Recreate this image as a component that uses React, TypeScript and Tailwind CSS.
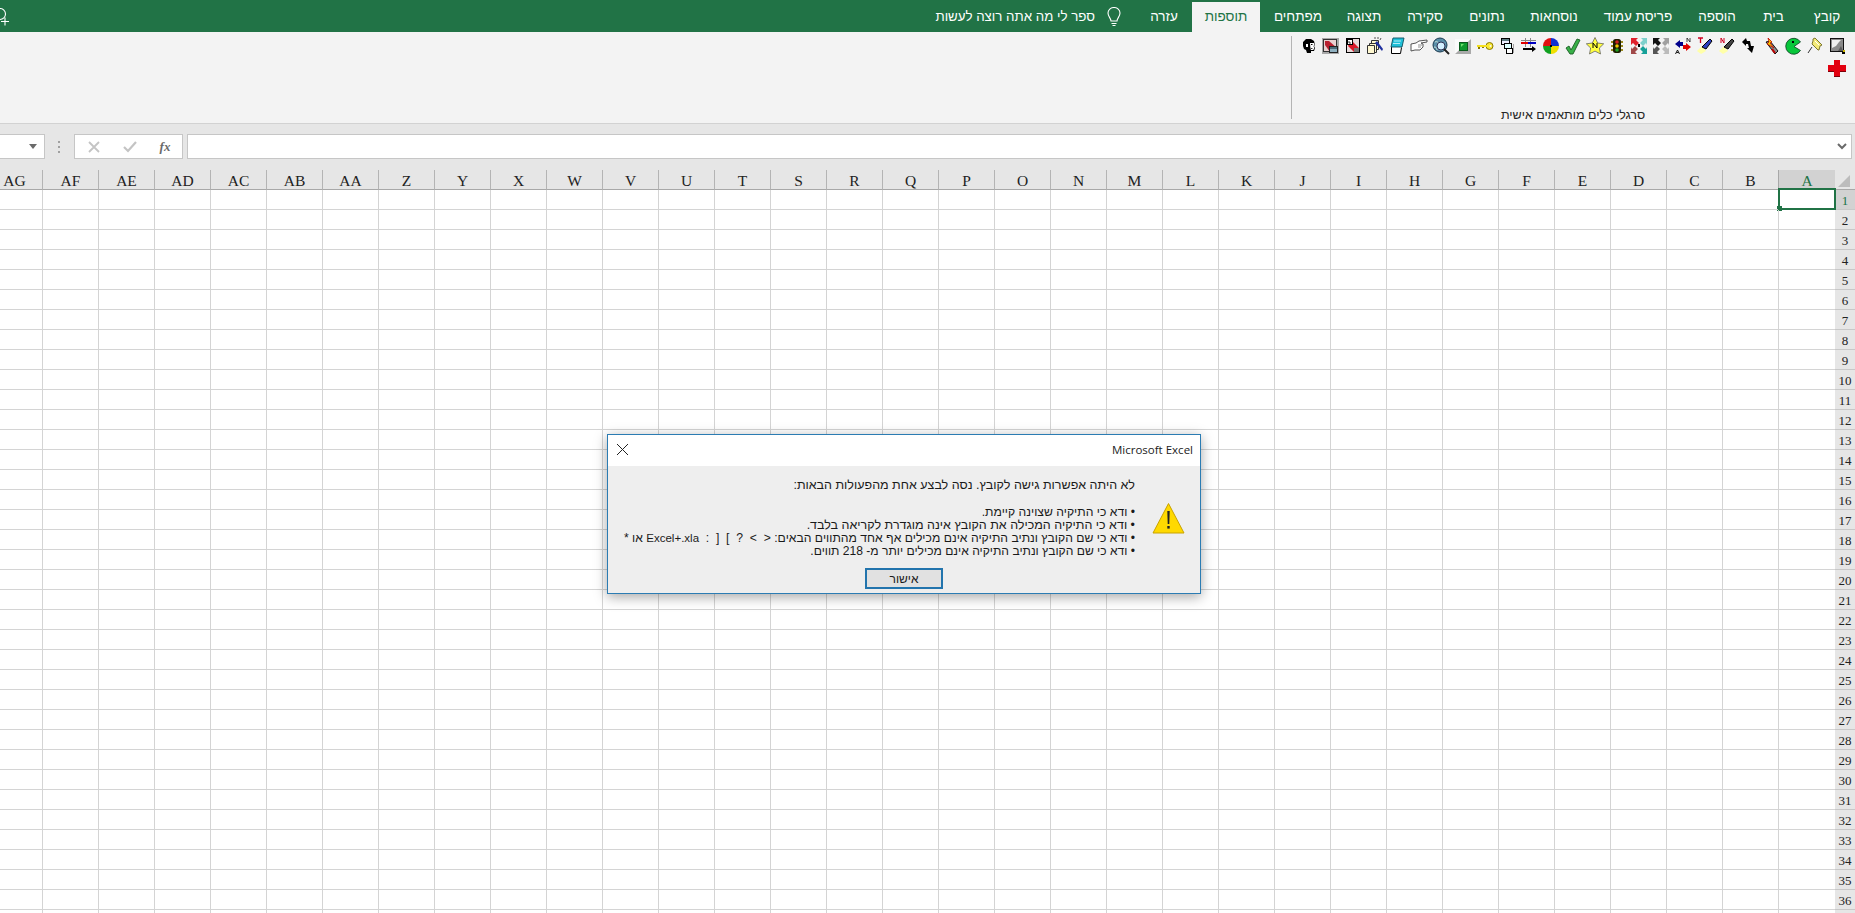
import React from "react";

const S = ({ children }: { children: React.ReactNode }) => (
  <svg width="18" height="18" viewBox="0 0 18 18" className="shrink-0">
    {children}
  </svg>
);

const icons: React.ReactNode[] = [
  // right to left order
  <S key="screen">
    <rect x="2.500" y="1.500" width="13" height="13" fill="#8a8a8a" stroke="#111" />
    <path d="M4 3h9l-2 2-3 4-4 2z" fill="#eee" />
    <path d="M13 9l2 5h-5z" fill="#5c5c5c" />
    <path d="M14 15h3v2h-3z" fill="#000" />
    <rect x="15" y="13" width="2" height="2" fill="#c9b400" />
  </S>,
  <S key="pin">
    <path d="M7 2l2-1 7 7-2 1-1 4-1 0-6-6 1-3z" fill="#f3ea78" stroke="#6f6a20" strokeWidth=".9" />
    <path d="M6 10L2 16" stroke="#333" strokeWidth="1" />
    <path d="M9 4l4 4" stroke="#fff" />
  </S>,
  <S key="pac">
    <path d="M16.500 5A8 8 0 1 0 16.500 13.500L10 9.500z" fill="#08c63a" stroke="#0a3a20" strokeWidth=".8" />
    <rect x="8" y="4" width="2" height="2" fill="#000" />
  </S>,
  <S key="bolt">
    <path d="M4 5l4-1 8 10-3 3z" fill="#8a8a8a" stroke="#000" strokeWidth=".9" />
    <path d="M6 1l4 4-2 1 4 5-7-4 2-2z" fill="#f4d000" stroke="#c00000" strokeWidth=".8" />
    <path d="M10 12l3 4" stroke="#c00000" strokeWidth="2" />
  </S>,
  <S key="swap">
    <path d="M2 5l4-4 1 3h3l1 5h3l-2 7-5-5h2l-1-4H6v2z" fill="#000" />
  </S>,
  <S key="torchn">
    <path d="M6 9l4 5-5 3-4-3z" fill="#ffffa8" />
    <path d="M6 10l8-8 2 2-6 8z" fill="#444" stroke="#000" />
    <path d="M3 1v5M3 1l3 5M6 1v5" stroke="#d00020" fill="none" strokeWidth="1" />
  </S>,
  <S key="torcht">
    <path d="M6 9l4 5-5 3-4-3z" fill="#ffffa8" />
    <path d="M6 10l8-8 2 2-6 8z" fill="#2c3fc0" stroke="#000" />
    <path d="M2 1h5M4.500 1v5" stroke="#d00020" fill="none" strokeWidth="1.300" />
  </S>,
  <S key="aarrows">
    <path d="M1 7l5-4v2h3v4H6v2z" fill="#00008c" />
    <path d="M17 10l-5-4v2H9v4h3v2z" fill="#e00000" />
    <path d="M1.500 17l2-4 2 4M2.500 15.500h2" stroke="#000" fill="none" strokeWidth=".9" />
    <path d="M13 5V1l3 4V1" stroke="#000" fill="none" strokeWidth=".7" />
  </S>,
  <S key="grayarrows">
    <path d="M1 1h7L6 3l3 3-3 3-3-3-2 2z" fill="#111" />
    <path d="M17 1h-6l2 2-3 3 3 3 3-3 1 2z" fill="#a0a0a0" />
    <path d="M1 17h6l-2-2 3-3-3-3-3 3-1-2z" fill="#555" />
    <path d="M17 17h-6l2-2-3-3 3-3 3 3 1-2z" fill="#bbb" />
  </S>,
  <S key="colorarrows">
    <path d="M1 1h7L6 3l3 3-3 3-3-3-2 2z" fill="#e0202c" />
    <path d="M17 1h-6l2 2-3 3 3 3 3-3 1 2z" fill="#7fd0cc" />
    <path d="M1 17h6l-2-2 3-3-3-3-3 3-1-2z" fill="#a04848" />
    <path d="M17 17h-6l2-2-3-3 3-3 3 3 1-2z" fill="#16a098" />
    <rect x="8" y="7" width="2" height="3" fill="#000" />
  </S>,
  <S key="traffic">
    <rect x="5" y="2" width="8" height="14" rx="2.500" fill="#1c1c00" />
    <rect x="3" y="4" width="2" height="2" fill="#9a8a20" />
    <rect x="13" y="4" width="2" height="2" fill="#9a8a20" />
    <rect x="3" y="8" width="2" height="2" fill="#9a8a20" />
    <rect x="13" y="8" width="2" height="2" fill="#9a8a20" />
    <rect x="3" y="12" width="2" height="2" fill="#9a8a20" />
    <rect x="13" y="12" width="2" height="2" fill="#9a8a20" />
    <circle cx="9" cy="5" r="1.800" fill="#d02020" />
    <circle cx="9" cy="9" r="1.800" fill="#f0c800" />
    <circle cx="9" cy="13" r="1.800" fill="#20a020" />
  </S>,
  <S key="star">
    <path d="M9 .500l2.700 5.500 6 .800-4.300 4.200 1.100 6-5.500-2.900-5.500 2.900 1.100-6L.300 6.800l6-.800z" fill="#ffff40" stroke="#555" strokeWidth=".7" />
    <path d="M7 11V6l4 5V6" stroke="#000" fill="none" strokeWidth="1" />
  </S>,
  <S key="check">
    <path d="M2 11l3-2 2 4 6-11 3 1-7 14H6z" fill="#38b048" stroke="#1a5c24" strokeWidth=".9" />
  </S>,
  <S key="wheel">
    <path d="M9 1A8 8 0 0 1 17 9H9z" fill="#1030d0" />
    <path d="M17 9A8 8 0 0 1 9 17V9z" fill="#f0e000" />
    <path d="M9 17A8 8 0 0 1 1 9H9z" fill="#10a020" />
    <path d="M1 9A8 8 0 0 1 9 1V9z" fill="#e01010" />
    <rect x="8" y="8" width="2" height="2" fill="#000" />
  </S>,
  <S key="gridarrow">
    <path d="M5.500 1v9M10.500 1v9M1 3.500h15" stroke="#888" fill="none" />
    <rect x="1" y="5" width="7" height="2" fill="#e00000" />
    <rect x="8" y="5" width="8" height="2" fill="#0000c0" />
    <path d="M3 11h9v-2l4 3-4 3v-2H3z" fill="#000" />
  </S>,
  <S key="windows">
    <rect x="3.500" y="1.500" width="8" height="6" fill="#eef" stroke="#000" />
    <rect x="6.500" y="6.500" width="7" height="5" fill="#dff" stroke="#000" />
    <rect x="8.500" y="11.500" width="6" height="5" fill="#fff" stroke="#000" />
    <rect x="4" y="2" width="7" height="2" fill="#5a7a80" />
    <rect x="15" y="7" width="1" height="9" fill="#a0a0a0" />
  </S>,
  <S key="key">
    <circle cx="13.500" cy="9" r="3.500" fill="#f8e830" stroke="#8a7a00" />
    <circle cx="14.500" cy="9" r="1" fill="#f3f3f3" />
    <rect x="1" y="8" width="10" height="2" fill="#f4e020" />
    <rect x="2" y="10" width="2" height="2" fill="#8a7a00" />
    <rect x="6" y="10" width="2" height="1" fill="#8a7a00" />
  </S>,
  <S key="greensq">
    <rect x="1" y="2" width="16" height="15" fill="#a9a9a9" />
    <path d="M1 2h16L1 17z" fill="#fafafa" />
    <rect x="5.500" y="5.500" width="8" height="8" fill="#0e9a2e" stroke="#0a5a1c" />
    <path d="M7 7h3l-3 3z" fill="#70e070" />
  </S>,
  <S key="globe">
    <circle cx="8" cy="8" r="7" fill="#5a8ea8" stroke="#1a3a50" />
    <path d="M3 5c2-1 3 0 4 2M2 10c2 0 3 1 3 3" stroke="#c8e0d8" fill="none" />
    <circle cx="9" cy="9" r="4" fill="#d4f0ff" stroke="#335" />
    <path d="M12 12l5 5" stroke="#222" strokeWidth="2" />
  </S>,
  <S key="hand">
    <path d="M1 7l5-1 3-2 8-1v2l-6 1 2 1v3l-3 3H5l-4 1z" fill="#fff" stroke="#444" strokeWidth=".9" />
    <path d="M8 8h4M8 10h3" stroke="#777" strokeWidth=".8" />
  </S>,
  <S key="note">
    <path d="M3.500 9.500v7h9l1-6" fill="#fff" stroke="#000" />
    <path d="M5 1h11l-2 9H3z" fill="#20c0d8" stroke="#0c5060" strokeWidth=".9" />
    <path d="M6 4h7M5 6.500h7" stroke="#d8f8ff" strokeWidth=".8" />
  </S>,
  <S key="pages">
    <path d="M5.500 3.500h7v9h-7z" fill="#fff8d0" stroke="#333" />
    <path d="M3.500 6.500h7v9h-7z" fill="#fff8d0" stroke="#333" />
    <path d="M1.500 8.500h7v8h-7z" fill="#fff8d0" stroke="#333" />
    <path d="M16 14L9 6l2-2 6 8z" fill="#2030a0" />
    <path d="M9 0v2M12 0v2M15 1l-1 2" stroke="#555" />
  </S>,
  <S key="redwin2">
    <rect x="2.500" y="1.500" width="13" height="14" fill="#e8dada" stroke="#000" />
    <path d="M6 5h3l6 6v4H10L4 9z" fill="#d81828" />
    <rect x="3.500" y="2.500" width="5" height="5" fill="#fff" stroke="#000" />
    <path d="M5 4v2h2" stroke="#000" fill="none" strokeWidth=".8" />
    <rect x="10" y="11" width="5" height="4" fill="#777" />
  </S>,
  <S key="redwin1">
    <rect x="0" y="1" width="17" height="16" fill="#a8a8a8" />
    <rect x="1.500" y="2.500" width="13" height="12" fill="#e8d0d0" stroke="#333" />
    <path d="M3 4h4l8 7v4H8L3 8z" fill="#b82030" />
    <rect x="7.500" y="9.500" width="8" height="6" fill="#8fb0c0" stroke="#222" />
    <rect x="8" y="10" width="7" height="2" fill="#4a6a78" />
  </S>,
  <S key="face">
    <path d="M6 2h5l3 2 1 4-1 1 1 2-1 3h-3v2H7l-1-3-2-1-1-3V5z" fill="#000" />
    <path d="M10 6h4l.500 2-1 1 .800 2-1 2h-2.500l-.500-3z" fill="#fff" />
    <path d="M11 7.500h1.500" stroke="#000" />
    <path d="M6 7h2v3H6z" fill="#fff" />
    <path d="M11 11.500h1.500" stroke="#000" strokeWidth=".8" />
  </S>,
];

const letters = "A B C D E F G H I J K L M N O P Q R S T U V W X Y Z AA AB AC AD AE AF AG".split(" ");
const rows = Array.from({ length: 37 }, (_, i) => i + 1);
const tabs: [string, string][] = [
  ["קובץ", "w-[56px]"],
  ["בית", "w-[51px]"],
  ["הוספה", "w-[62px]"],
  ["פריסת עמוד", "w-[96px]"],
  ["נוסחאות", "w-[72px]"],
  ["נתונים", "w-[62px]"],
  ["סקירה", "w-[62px]"],
  ["תצוגה", "w-[60px]"],
  ["מפתחים", "w-[72px]"],
];

export default function App() {
  return (
    <div dir="rtl" className="relative flex h-[913px] w-[1855px] flex-col overflow-hidden bg-white font-['Liberation_Sans',sans-serif] text-[#262626]">
      {/* Tab strip */}
      <div className="relative flex h-8 shrink-0 items-end bg-[#217346] text-[13.5px] text-white">
        {tabs.map(([t, w]) => (
          <div key={t} className={`flex h-[30px] shrink-0 items-center justify-center ${w}`}>{t}</div>
        ))}
        <div className="mr-[2px] flex h-[30px] w-[68px] shrink-0 items-center justify-center bg-[#f3f3f3] text-[#217346]">תוספות</div>
        <div className="flex h-[30px] w-[56px] shrink-0 items-center justify-center">עזרה</div>
        <div className="mr-[14px] flex h-[30px] items-center">
          <svg width="16" height="20" viewBox="0 0 16 20" fill="none" stroke="#fff" strokeWidth="1.100">
            <path d="M5 14c0-3-3-4-3-8a6 5.500 0 0 1 12 0c0 4-3 5-3 8z" />
            <path d="M5.500 16.500h5M6.500 18.500h3" />
          </svg>
        </div>
        <div className="mr-[11px] flex h-[30px] items-center text-[13.300px]">ספר לי מה אתה רוצה לעשות</div>
        <div className="absolute bottom-[4px] left-0">
          <svg width="11" height="20" viewBox="0 0 11 20" fill="none" stroke="#fff" strokeWidth="1.100">
            <circle cx="0" cy="6" r="5.500" />
            <path d="M5 9.500v8M1 13.500h8" />
          </svg>
        </div>
      </div>

      {/* Ribbon */}
      <div className="flex h-[92px] shrink-0 border-b border-[#d2d2d2] bg-[#f3f3f3]">
        <div className="relative flex h-full w-[564px] shrink-0 flex-col pr-[9px] pt-[5px]">
          <div className="flex flex-wrap gap-x-1 gap-y-[4px]">
            {icons.map((ic, i) => (
              <div key={i} className="h-[18px] w-[18px]">{ic}</div>
            ))}
            <div className="h-[18px] w-[18px]">
              <svg width="18" height="18" viewBox="0 0 18 18" shapeRendering="crispEdges">
                <path d="M6 1h6v5h6v6h-6v5H6v-5H0V6h6z" fill="#e2000f" />
                <path d="M6 17h6v1H6zM12 12h6v1h-6zM0 12h6v1H0z" fill="#7a0008" />
              </svg>
            </div>
          </div>
          <div className="absolute bottom-0 left-0 right-0 text-center text-[12.500px] leading-[16px]">סרגלי כלים מותאמים אישית</div>
          <div className="absolute bottom-1 left-0 top-1 w-px bg-[#b4b4b4]" />
        </div>
      </div>

      {/* Formula bar */}
      <div className="flex h-[46px] shrink-0 items-center bg-[#e6e6e6] pb-px pr-[3px]">
        <div className="flex h-[25px] w-[1665px] shrink-0 items-center justify-start border border-[#c6c6c6] bg-white pr-[4px]">
          <svg width="10" height="7" viewBox="0 0 10 7" fill="none" stroke="#6a6a6a" strokeWidth="2"><path d="M1 1l4 4 4-4" /></svg>
        </div>
        <div className="mr-[4px] flex h-[25px] w-[109px] shrink-0 flex-row-reverse items-center border border-[#c6c6c6] bg-white">
          <div className="flex w-[37px] justify-center">
            <svg width="12" height="12" viewBox="0 0 12 12" stroke="#c4c4c4" strokeWidth="1.800"><path d="M1 1l10 10M11 1L1 11" /></svg>
          </div>
          <div className="flex w-[36px] justify-center">
            <svg width="14" height="12" viewBox="0 0 14 12" fill="none" stroke="#c4c4c4" strokeWidth="2.200"><path d="M1 6l4 4 8-9" /></svg>
          </div>
          <div className="flex w-[34px] justify-center font-['Liberation_Serif',serif] text-[13px] font-bold italic text-[#6a6a6a]">fx</div>
        </div>
        <div className="mr-[14px] flex w-[4px] flex-col gap-[3px]">
          <div className="h-[2px] w-[2px] bg-[#a0a0a0]" />
          <div className="h-[2px] w-[2px] bg-[#a0a0a0]" />
          <div className="h-[2px] w-[2px] bg-[#a0a0a0]" />
        </div>
        <div className="mr-[13px] flex h-[25px] w-[60px] shrink-0 items-center justify-start border border-[#c6c6c6] bg-white pr-[7px]">
          <div className="h-0 w-0 border-x-[4px] border-t-[5px] border-x-transparent border-t-[#6a6a6a]" />
        </div>
      </div>

      {/* Sheet */}
      <div className="flex min-h-0 flex-1 flex-col font-['Liberation_Serif',serif]">
        <div className="flex h-5 shrink-0 bg-[#e6e6e6] text-[15.5px] leading-[21px]">
          <div className="relative w-5 shrink-0 border-b border-[#a8a8a8]">
            <div className="absolute bottom-[2px] left-[3px] h-0 w-0 border-b-[12px] border-l-[12px] border-b-[#bcbcbc] border-l-transparent" />
          </div>
          {letters.map((l, i) => (
            <div
              key={l}
              className={
                i === 0
                  ? "w-[57px] shrink-0 border-b border-l border-[#a8a8a8] bg-[#d2d2d2] text-center text-[#217346]"
                  : "w-14 shrink-0 border-b border-l border-b-[#a8a8a8] border-l-[#b4b4b4] text-center text-[#222]"
              }
            >
              {l}
            </div>
          ))}
        </div>
        {rows.map((r) => (
          <div key={r} className="flex h-5 shrink-0">
            <div
              className={
                r === 1
                  ? "w-5 shrink-0 border-b border-[#c8c8c8] bg-[#d2d2d2] text-center text-[13px] leading-[22px] text-[#217346]"
                  : "w-5 shrink-0 border-b border-[#c8c8c8] bg-[#e6e6e6] text-center text-[13px] leading-[22px] text-[#222]"
              }
            >
              {r < 37 ? r : ""}
            </div>
            {letters.map((l, i) => (
              <div key={l} className={`relative shrink-0 border-b border-l border-[#d4d4d4] ${i === 0 ? "w-[57px]" : "w-14"}`}>
                {i === 0 && r === 1 && (
                  <div className="absolute -bottom-px -left-px -right-px -top-[2px] border-2 border-[#217346]">
                    <div className="absolute -bottom-[3px] -left-[3px] h-[5px] w-[5px] bg-[#217346]" />
                  </div>
                )}
              </div>
            ))}
          </div>
        ))}
      </div>

      {/* Dialog */}
      <div className="absolute left-[607px] top-[434px] flex h-[160px] w-[594px] flex-col border border-[#2b7cb3] bg-[#eeeeee] shadow-[0_3px_12px_rgba(0,0,0,0.35)]">
        <div className="flex h-[31px] shrink-0 items-center justify-between bg-white pl-[8px] pr-[7px]">
          <div dir="ltr" className="-mt-[1px] font-['Open_Sans',sans-serif] text-[11.500px] text-[#222]">Microsoft Excel</div>
          <svg width="13" height="13" viewBox="0 0 13 13" stroke="#222" strokeWidth="1" className="-mt-[3px]"><path d="M1 1l11 11M12 1L1 12" /></svg>
        </div>
        <div className="flex flex-1 pr-[17px] pt-[13px]">
          <div className="mt-[23px] w-[48px] shrink-0">
            <svg width="33" height="32" viewBox="0 0 33 32" className="-mr-[2px]">
              <path d="M16.500 1.500L32 31H1z" fill="#ffd900" stroke="#c8a200" strokeLinejoin="round" />
              <path d="M15.300 9h2.400l-.4 13h-1.600z" fill="#222" />
              <rect x="15.300" y="24" width="2.400" height="2.600" fill="#222" />
            </svg>
          </div>
          <div className="min-w-0 flex-1 text-[12.500px] leading-[13px] text-[#1a1a1a]">
            <div className="h-[27px]">לא היתה אפשרות גישה לקובץ. נסה לבצע אחת מהפעולות הבאות:</div>
            <div className="whitespace-nowrap text-[12.200px]">• ודא כי התיקיה שצוינה קיימת.</div>
            <div className="whitespace-nowrap">• ודא כי התיקיה המכילה את הקובץ אינה מוגדרת לקריאה בלבד.</div>
            <div className="whitespace-nowrap text-[12.200px]">• ודא כי שם הקובץ ונתיב התיקיה אינם מכילים אף אחד מהתווים הבאים: {"<\u00A0\u00A0>\u00A0\u00A0?\u00A0\u00A0]\u00A0\u00A0[\u00A0\u00A0:\u00A0\u00A0"}<span className="text-[11.500px]">Excel+.xla</span> או *</div>
            <div className="whitespace-nowrap text-[12.100px]">• ודא כי שם הקובץ ונתיב התיקיה אינם מכילים יותר מ- 218 תווים.</div>
          </div>
        </div>
        <div className="flex shrink-0 justify-center pb-[4px]">
          <div className="flex h-[21px] w-[78px] items-center justify-center border-2 border-[#2274ad] bg-[#e1e1e1] text-[12px] text-[#1a1a1a]">אישור</div>
        </div>
      </div>
    </div>
  );
}
